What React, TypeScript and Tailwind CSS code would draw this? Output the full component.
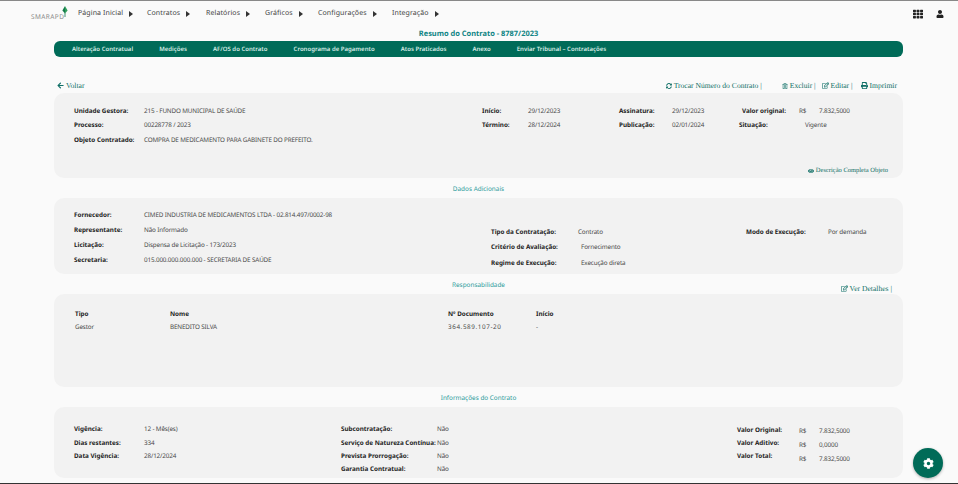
import { FaArrowLeft, FaCog, FaEye, FaPrint, FaRegEdit, FaRegTrashAlt, FaSyncAlt, FaTh, FaUser } from 'react-icons/fa';
import type { ReactNode } from 'react';

const menu = [
  { label: 'Página Inicial', cls: 'w-[69px]' },
  { label: 'Contratos', cls: 'w-[59px]' },
  { label: 'Relatórios', cls: 'w-[59px]' },
  { label: 'Gráficos', cls: 'w-[53px]' },
  { label: 'Configurações', cls: 'w-[74px]' },
  { label: 'Integração', cls: 'w-[60px]' },
];

const tabs = [
  'Alteração Contratual',
  'Medições',
  'AF/OS do Contrato',
  'Cronograma de Pagamento',
  'Atos Praticados',
  'Anexo',
  'Enviar Tribunal – Contratações',
];

function Label({ children, className = '' }: { children: ReactNode; className?: string }) {
  return <span className={`block shrink-0 whitespace-nowrap text-[6.3px] font-bold tracking-normal text-[#1c1c1c] ${className}`}>{children}</span>;
}

function Field({ label, value, labelCls, valueCls = '', rowCls = 'h-[14.7px]' }: { label: string; value: string; labelCls: string; valueCls?: string; rowCls?: string }) {
  return (
    <div className={`flex items-center ${rowCls}`}>
      <Label className={labelCls}>{label}</Label>
      <span className={`whitespace-nowrap ${valueCls}`}>{value}</span>
    </div>
  );
}

function SectionTitle({ children }: { children: ReactNode }) {
  return <div className="flex h-[20px] items-center justify-center pt-[2px] text-[6.4px] tracking-normal text-[#2a9a9a]">{children}</div>;
}

function LinkText({ icon, children, className = 'text-[7.6px]' }: { icon: ReactNode; children: ReactNode; className?: string }) {
  return (
    <span className={`flex items-center gap-[2px] whitespace-nowrap font-['Liberation_Serif',serif] tracking-normal text-[#0f6f66] ${className}`}>
      {icon}
      {children}
    </span>
  );
}

function Header() {
  return (
    <header className="flex h-[26px] items-center">
      <div className="ml-[31px] flex w-[47px] shrink-0 items-end pb-[1px]">
        <span className="text-[6.5px] leading-[8px] tracking-[0.4px] text-[#8a8a8a]">SMARAPD</span>
        <svg viewBox="0 0 6 11" className="mb-[4px] ml-[-2px] h-[11px] w-[6px]">
          <path d="M3 0 L5.6 4.5 L3 7.5 Z" fill="#2f9e5b" />
          <path d="M3 0 L.4 4.5 L3 7.5 Z" fill="#147a4a" />
          <path d="M2.6 7 H3.4 V11 H2.6 Z" fill="#147a4a" />
        </svg>
      </div>
      <nav className="flex text-[7px] tracking-[0.1px] text-[#444]">
        {menu.map((m) => (
          <div key={m.label} className={`flex items-center gap-[6px] ${m.cls}`}>
            <span className="whitespace-nowrap">{m.label}</span>
            <span className="h-0 w-0 border-y-[3px] border-l-[4px] border-y-transparent border-l-[#333]" />
          </div>
        ))}
      </nav>
      <div className="ml-auto mr-[14px] flex items-center gap-[13px] text-[#222]">
        <FaTh className="h-[10px] w-[10px]" />
        <FaUser className="h-[8px] w-[8px]" />
      </div>
    </header>
  );
}

export default function App() {
  return (
    <div className="relative flex h-[484px] w-[958px] flex-col overflow-hidden border-y border-t-[#888] border-b-[#333] bg-[#fafafa] font-['Noto_Sans',sans-serif] text-[6.3px] tracking-[-0.14px] text-[#4a4a4a] [text-rendering:geometricPrecision]">
      <Header />

      <div className="ml-[54px] mr-[55px] flex flex-col">
        <h1 className="flex h-[14px] items-center justify-center pt-[2px] text-[7.45px] font-bold tracking-normal text-[#0f8585]">Resumo do Contrato - 8787/2023</h1>
        <div className="flex h-[16px] items-center gap-[26px] rounded-[6px] bg-[#006b58] pl-[18px] text-[6px] font-semibold tracking-[0.02px] text-[#d8ece6]">
          {tabs.map((t) => (
            <span key={t} className="whitespace-nowrap">{t}</span>
          ))}
        </div>

        <div className="mt-[22px] flex h-[14px] items-center pl-[3px]">
          <LinkText icon={<FaArrowLeft className="h-[7px] w-[7px]" />}>Voltar</LinkText>
          <div className="ml-auto flex items-center pr-[6px]">
            <LinkText icon={<FaSyncAlt className="h-[6px] w-[6px]" />} className="mr-[20px] text-[7.6px]">Trocar Número do Contrato |</LinkText>
            <LinkText icon={<FaRegTrashAlt className="h-[6px] w-[6px]" />} className="mr-[6px] text-[7.6px]">Excluir |</LinkText>
            <LinkText icon={<FaRegEdit className="h-[7px] w-[7px]" />} className="mr-[8px] text-[7.6px]">Editar |</LinkText>
            <LinkText icon={<FaPrint className="h-[7px] w-[7px]" />}>Imprimir</LinkText>
          </div>
        </div>

        {/* resumo */}
        <section className="flex h-[85px] flex-col rounded-[10px] bg-[#f2f2f2] pl-[20px] pt-[10px]">
          <div className="flex">
            <div className="w-[408px]">
              <Field label="Unidade Gestora:" value="215 - FUNDO MUNICIPAL DE SAÚDE" labelCls="w-[70px]" />
              <Field label="Processo:" value="00228778 / 2023" labelCls="w-[70px]" />
              <Field label="Objeto Contratado:" value="COMPRA DE MEDICAMENTO PARA GABINETE DO PREFEITO." labelCls="w-[70px]" />
            </div>
            <div className="w-[137px]">
              <Field label="Início:" value="29/12/2023" labelCls="w-[46px]" />
              <Field label="Término:" value="28/12/2024" labelCls="w-[46px]" />
            </div>
            <div className="w-[123px]">
              <Field label="Assinatura:" value="29/12/2023" labelCls="w-[53px]" />
              <Field label="Publicação:" value="02/01/2024" labelCls="w-[53px]" />
            </div>
            <div>
              <div className="flex h-[14.7px] items-center">
                <Label className="w-[57px]">Valor original:</Label>
                <span className="w-[20px]">R$</span>
                <span>7.832,5000</span>
              </div>
              <Field label="Situação:" value="Vigente" labelCls="ml-[-3px] w-[66px]" />
            </div>
          </div>
          <div className="mt-auto flex h-[15px] items-center justify-end pr-[15px]">
            <LinkText icon={<FaEye className="h-[6px] w-[6px]" />} className="text-[6.5px]">Descrição Completa Objeto</LinkText>
          </div>
        </section>

        <SectionTitle>Dados Adicionais</SectionTitle>

        <section className="flex h-[76px] rounded-[10px] bg-[#f2f2f2] pl-[20px] pt-[9.5px]">
          <div className="w-[417px]">
            <Field label="Fornecedor:" value="CIMED INDUSTRIA DE MEDICAMENTOS LTDA - 02.814.497/0002-98" labelCls="w-[70px]" rowCls="h-[15px]" />
            <Field label="Representante:" value="Não Informado" labelCls="w-[70px]" rowCls="h-[15px]" />
            <Field label="Licitação:" value="Dispensa de Licitação - 173/2023" labelCls="w-[70px]" rowCls="h-[15px]" />
            <Field label="Secretaria:" value="015.000.000.000.000 - SECRETARIA DE SAÚDE" labelCls="w-[70px]" rowCls="h-[15px]" />
          </div>
          <div className="w-[255px] pt-[16px]">
            <Field label="Tipo da Contratação:" value="Contrato" labelCls="w-[87px]" rowCls="h-[15.5px]" />
            <Field label="Critério de Avaliação:" value="Fornecimento" labelCls="w-[90px]" rowCls="h-[15.5px]" />
            <Field label="Regime de Execução:" value="Execução direta" labelCls="w-[90px]" rowCls="h-[15.5px]" />
          </div>
          <div className="pt-[16px]">
            <Field label="Modo de Execução:" value="Por demanda" labelCls="w-[82px]" rowCls="h-[15.5px]" />
          </div>
        </section>

        <div className="relative">
          <SectionTitle>Responsabilidade</SectionTitle>
          <div className="absolute right-[11px] top-[9px] h-[14px]">
            <LinkText icon={<FaRegEdit className="h-[7px] w-[7px]" />}>Ver Detalhes |</LinkText>
          </div>
        </div>

        <section className="h-[93px] rounded-[10px] bg-[#f2f2f2] pl-[21px] pt-[13px]">
          <div className="grid grid-cols-[95px_278px_88px_1fr] items-center">
            <Label className="h-[13px] leading-[13px]">Tipo</Label>
            <Label className="h-[13px] leading-[13px]">Nome</Label>
            <Label className="h-[13px] leading-[13px]">Nº Documento</Label>
            <Label className="h-[13px] leading-[13px]">Início</Label>
            <span className="h-[13px] leading-[13px]">Gestor</span>
            <span className="h-[13px] leading-[13px]">BENEDITO SILVA</span>
            <span className="h-[13px] leading-[13px] tracking-[0.6px]">364.589.107-20</span>
            <span className="h-[13px] leading-[13px]">-</span>
          </div>
        </section>

        <SectionTitle>Informações do Contrato</SectionTitle>

        <section className="flex h-[71px] rounded-[10px] bg-[#f2f2f2] pl-[20px] pt-[15.5px]">
          <div className="w-[267px]">
            <Field label="Vigência:" value="12 - Mês(es)" labelCls="w-[70px]" rowCls="h-[13.3px]" />
            <Field label="Dias restantes:" value="334" labelCls="w-[70px]" rowCls="h-[13.3px]" />
            <Field label="Data Vigência:" value="28/12/2024" labelCls="w-[70px]" rowCls="h-[13.3px]" />
          </div>
          <div className="w-[396px]">
            <Field label="Subcontratação:" value="Não" labelCls="w-[96px]" rowCls="h-[13.3px]" />
            <Field label="Serviço de Natureza Contínua:" value="Não" labelCls="w-[96px]" rowCls="h-[13.3px]" />
            <Field label="Prevista Prorrogação:" value="Não" labelCls="w-[96px]" rowCls="h-[13.3px]" />
            <Field label="Garantia Contratual:" value="Não" labelCls="w-[96px]" rowCls="h-[13.3px]" />
          </div>
          <div className="flex items-start">
            <div className="w-[62px]">
              <Label className="h-[13.3px] leading-[13.3px]">Valor Original:</Label>
              <Label className="h-[13.3px] leading-[13.3px]">Valor Aditivo:</Label>
              <Label className="h-[13.3px] leading-[13.3px]">Valor Total:</Label>
            </div>
            <div className="grid grid-cols-[20px_1fr] pt-[1px]">
              <span className="h-[14px] leading-[14px]">R$</span>
              <span className="h-[14px] leading-[14px]">7.832,5000</span>
              <span className="h-[14px] leading-[14px]">R$</span>
              <span className="h-[14px] leading-[14px]">0,0000</span>
              <span className="h-[14px] leading-[14px]">R$</span>
              <span className="h-[14px] leading-[14px]">7.832,5000</span>
            </div>
          </div>
        </section>
      </div>

      <button className="absolute right-[15px] top-[447px] flex h-[30px] w-[30px] items-center justify-center rounded-full bg-[#006b58] text-white shadow-[0_1px_3px_rgba(0,0,0,0.3)]">
        <FaCog className="h-[11px] w-[11px]" />
      </button>
    </div>
  );
}
